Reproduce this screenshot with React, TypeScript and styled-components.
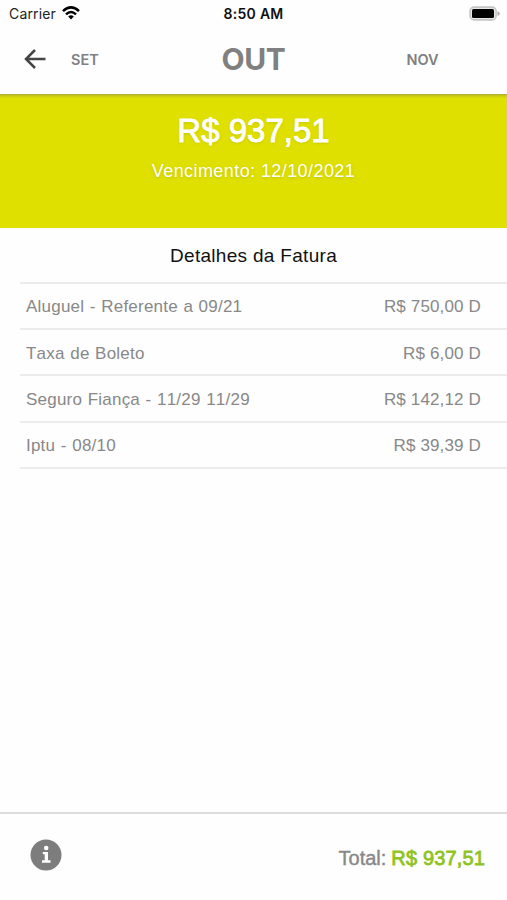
import React from "react";
import styled, { createGlobalStyle } from "styled-components";

const GlobalStyle = createGlobalStyle`
  * { box-sizing: border-box; }
  body {
    margin: 0;
    background: #fefefe;
    font-family: "Liberation Sans", Arial, sans-serif;
  }
`;

const Screen = styled.div`
  width: 507px;
  height: 900px;
  display: flex;
  flex-direction: column;
  overflow: hidden;
`;

const StatusBar = styled.header`
  height: 28px;
  flex: none;
  display: grid;
  grid-template-columns: 1fr auto 1fr;
  align-items: center;
  padding: 0 7px 0 7px;
  font-family: Inter, sans-serif;
  color: #222;
`;

const Carrier = styled.div`
  display: flex;
  align-items: center;
  gap: 6px;
  padding: 0 0 1px 2px;
  font-size: 14px;
  letter-spacing: 0.15px;
  svg { margin-top: -2px; }
`;

const Clock = styled.time`
  font-size: 14px;
  font-weight: 600;
  letter-spacing: 0.3px;
  padding-bottom: 2px;
  color: #111;
`;

const Battery = styled.svg`
  justify-self: end;
  margin-top: -2px;
`;

const MonthBar = styled.nav`
  height: 66px;
  flex: none;
  display: grid;
  grid-template-columns: 71px 98px 169px 169px;
  align-items: center;
  padding-bottom: 4px;
`;

const BackButton = styled.button`
  border: 0;
  padding: 0 0 0 24px;
  background: none;
  display: flex;
`;

const Month = styled.span<{ $current?: boolean }>`
  font-family: Inter, sans-serif;
  font-size: ${(p) => (p.$current ? 30 : 14.5)}px;
  font-weight: ${(p) => (p.$current ? 700 : 600)};
  letter-spacing: ${(p) => (p.$current ? -0.4 : 0)}px;
  color: #808080;
  justify-self: ${(p) => (p.$current ? "center" : "start")};
  &:last-child { justify-self: center; }
`;

const Summary = styled.section`
  height: 134px;
  flex: none;
  background: linear-gradient(#a9a940, #c5c51c 1.5px, #dfe000 4px);
  color: #fff;
  display: flex;
  flex-direction: column;
  align-items: center;
  padding-top: 17px;
  text-shadow: 0 1px 3px rgba(90, 90, 0, 0.22);
`;

const Amount = styled.strong`
  font-size: 33px;
  line-height: 40px;
  font-weight: 400;
  -webkit-text-stroke: 0.9px #fff;
`;

const DueDate = styled.span`
  font-size: 18px;
  line-height: 22px;
  margin-top: 9px;
  letter-spacing: 0.42px;
`;

const Title = styled.h1`
  margin: 0;
  height: 53.5px;
  flex: none;
  font-size: 19px;
  font-weight: 400;
  line-height: 55px;
  letter-spacing: 0.3px;
  text-align: center;
  color: #111;
`;

const Items = styled.ul`
  list-style: none;
  margin: 0 0 0 20px;
  padding: 0;
  flex: 1;
  border-top: 2px solid #ececec;
`;

const Item = styled.li`
  height: 46.4px;
  display: flex;
  justify-content: space-between;
  align-items: center;
  padding: 3px 26px 0 6px;
  border-bottom: 2px solid #ececec;
  font-size: 17px;
  font-kerning: none;
  color: #888;
`;

const Label = styled.span`
  letter-spacing: 0.22px;
  word-spacing: 0.6px;
`;

const Value = styled.span`
  letter-spacing: 0.15px;
`;

const Footer = styled.footer`
  height: 88px;
  flex: none;
  border-top: 2px solid #dcdcdc;
  display: flex;
  justify-content: space-between;
  align-items: center;
  padding: 0 22px 4px 30px;
`;

const Total = styled.div`
  display: flex;
  gap: 5px;
  font-size: 20px;
  color: #888;
  padding-top: 6px;
  -webkit-text-stroke: 0.4px currentColor;
`;

const TotalAmount = styled.span`
  color: #8fc31f;
  letter-spacing: 0.15px;
  -webkit-text-stroke: 0.8px currentColor;
`;

const entries = [
  ["Aluguel - Referente a 09/21", "R$ 750,00 D"],
  ["Taxa de Boleto", "R$ 6,00 D"],
  ["Seguro Fiança - 11/29 11/29", "R$ 142,12 D"],
  ["Iptu - 08/10", "R$ 39,39 D"],
];

const WifiIcon = () => (
  <svg width="18" height="14" viewBox="0 0 18 14" fill="none" stroke="#000" strokeWidth="2.5">
    <path d="M1 5.2Q9-2.4 17 5.2" />
    <path d="M4 8.4Q9 3.7 14 8.4" />
    <path d="M6.2 10.4Q9 8 11.8 10.4L9 13.4Z" fill="#000" stroke="none" />
  </svg>
);

const BatteryIcon = () => (
  <Battery width="31" height="15" viewBox="0 0 31 15">
    <rect x="1.1" y="1.1" width="26" height="12.8" rx="4" fill="#e8e8e8" stroke="#c4c4c4" strokeWidth="1.6" />
    <rect x="3" y="3" width="22" height="9" rx="1.5" fill="#000" />
    <path d="M28.5 5Q30.8 6 30.8 7.5T28.5 10Z" fill="#aaa" />
  </Battery>
);

const ArrowIcon = () => (
  <svg width="22" height="20" viewBox="0 0 22 20" fill="none" stroke="#444" strokeWidth="2.5">
    <path d="M21.5 10H2.5M11 1L2 10L11 19" />
  </svg>
);

const InfoIcon = () => (
  <svg width="32" height="32" viewBox="0 0 32 32">
    <circle cx="16" cy="16" r="15.5" fill="#7d7d7d" />
    <circle cx="16.2" cy="9" r="2.3" fill="#fff" />
    <path d="M12.8 13H18V21.3H20.5V23.7H12V21.3H14.7V15.3H12.8Z" fill="#fff" />
  </svg>
);

export default function App() {
  return (
    <Screen>
      <GlobalStyle />
      <StatusBar>
        <Carrier>Carrier <WifiIcon /></Carrier>
        <Clock>8:50 AM</Clock>
        <BatteryIcon />
      </StatusBar>
      <MonthBar>
        <BackButton aria-label="Voltar"><ArrowIcon /></BackButton>
        <Month>SET</Month>
        <Month $current>OUT</Month>
        <Month>NOV</Month>
      </MonthBar>
      <Summary>
        <Amount>R$ 937,51</Amount>
        <DueDate>Vencimento: 12/10/2021</DueDate>
      </Summary>
      <Title>Detalhes da Fatura</Title>
      <Items>
        {entries.map(([label, value]) => (
          <Item key={label}>
            <Label>{label}</Label>
            <Value>{value}</Value>
          </Item>
        ))}
      </Items>
      <Footer>
        <InfoIcon />
        <Total>Total: <TotalAmount>R$ 937,51</TotalAmount></Total>
      </Footer>
    </Screen>
  );
}
